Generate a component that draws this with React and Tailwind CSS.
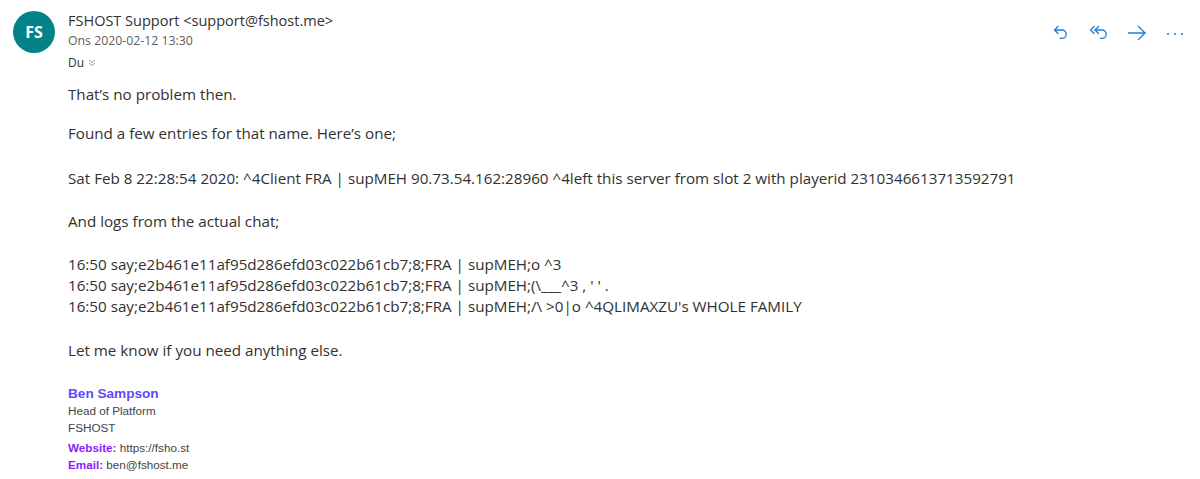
import React from "react";

const Reply = () => (
  <svg width="18" height="18" viewBox="0 0 18 18" fill="none" stroke="#1a7fd4" strokeWidth="1.3" strokeLinecap="round" strokeLinejoin="round">
    <path d="M6 2.5 L2.5 6 L6 9.5" />
    <path d="M2.5 6 H10 a4.2 4.2 0 0 1 0 8.4 H8" />
  </svg>
);

const ReplyAll = () => (
  <svg width="20" height="18" viewBox="0 0 20 18" fill="none" stroke="#1a7fd4" strokeWidth="1.3" strokeLinecap="round" strokeLinejoin="round">
    <path d="M5 2.5 L1.5 6 L5 9.5" />
    <path d="M9.5 2.5 L6 6 L9.5 9.5" />
    <path d="M6 6 H13 a4.2 4.2 0 0 1 0 8.4 H11.5" />
  </svg>
);

const Forward = () => (
  <svg width="20" height="18" viewBox="0 0 20 18" fill="none" stroke="#1a7fd4" strokeWidth="1.3" strokeLinecap="round" strokeLinejoin="round">
    <path d="M1.5 9 H18" />
    <path d="M11.5 2.5 L18 9 L11.5 15.5" />
  </svg>
);

const More = () => (
  <svg width="18" height="18" viewBox="0 0 18 18" fill="#1a7fd4">
    <circle cx="2" cy="10" r="1.1" />
    <circle cx="9" cy="10" r="1.1" />
    <circle cx="16" cy="10" r="1.1" />
  </svg>
);

export default function App() {
  const body = "font-['Open_Sans',sans-serif] text-[15.2px] leading-[21px] text-[#323130]";
  return (
    <div className="w-[1200px] h-[479px] bg-white overflow-hidden relative">
      <div className="flex pl-[13px] pt-[11px] pr-[6px]">
        <div className="w-[42px] h-[42px] rounded-full bg-[#038387] flex items-center justify-center shrink-0">
          <span className="text-white font-bold text-[16px] font-['Open_Sans',sans-serif]">FS</span>
        </div>
        <div className="ml-[13px] flex-1 flex flex-col font-['Open_Sans',sans-serif]">
          <div className="text-[14.5px] leading-[20px] text-[#323130]">FSHOST Support &lt;support@fshost.me&gt;</div>
          <div className="text-[12.3px] leading-[18px] text-[#605e5c] mt-[1px]">Ons 2020-02-12 13:30</div>
          <div className="text-[12px] leading-[18px] text-[#323130] mt-[4px] flex items-center gap-[4px]">
            Du
            <svg width="8" height="8" viewBox="0 0 8 8" fill="none" stroke="#8a8886" strokeWidth="0.9">
              <path d="M1 1 L4 3.5 L7 1" />
              <path d="M1 4 L4 6.5 L7 4" />
            </svg>
          </div>
        </div>
        <div className="flex items-start pt-[13px]">
          <div className="w-[38px] flex justify-center"><Reply /></div>
          <div className="w-[38px] flex justify-center"><ReplyAll /></div>
          <div className="w-[38px] flex justify-center"><Forward /></div>
          <div className="w-[38px] flex justify-center"><More /></div>
        </div>
      </div>

      <div className={`${body} pl-[68px] mt-[12px]`}>
        <p>That’s no problem then.</p>
        <p className="mt-[18px]">Found a few entries for that name. Here’s one;</p>
        <p className="mt-[24px]">Sat Feb 8 22:28:54 2020: ^4Client FRA | supMEH 90.73.54.162:28960 ^4left this server from slot 2 with playerid 2310346613713592791</p>
        <p className="mt-[22px]">And logs from the actual chat;</p>
        <div className="mt-[22px]">
          <p>16:50 say;e2b461e11af95d286efd03c022b61cb7;8;FRA | supMEH;o ^3</p>
          <p>16:50 say;e2b461e11af95d286efd03c022b61cb7;8;FRA | supMEH;(\___^3 , ' ' .</p>
          <p>16:50 say;e2b461e11af95d286efd03c022b61cb7;8;FRA | supMEH;/\ &gt;0|o ^4QLIMAXZU's WHOLE FAMILY</p>
        </div>
        <p className="mt-[23px]">Let me know if you need anything else.</p>
      </div>

      <div className="pl-[68px] mt-[24px] font-['Liberation_Sans',Arial,sans-serif] text-[11.7px] leading-[17px] text-[#444]">
        <div className="text-[13.6px] font-bold text-[#5a4bff] leading-[17px]">Ben Sampson</div>
        <div>Head of Platform</div>
        <div>FSHOST</div>
        <div className="mt-[3px]"><span className="font-bold text-[#8c1aff]">Website:</span> https://fsho.st</div>
        <div><span className="font-bold text-[#8c1aff]">Email:</span> ben@fshost.me</div>
      </div>
    </div>
  );
}
